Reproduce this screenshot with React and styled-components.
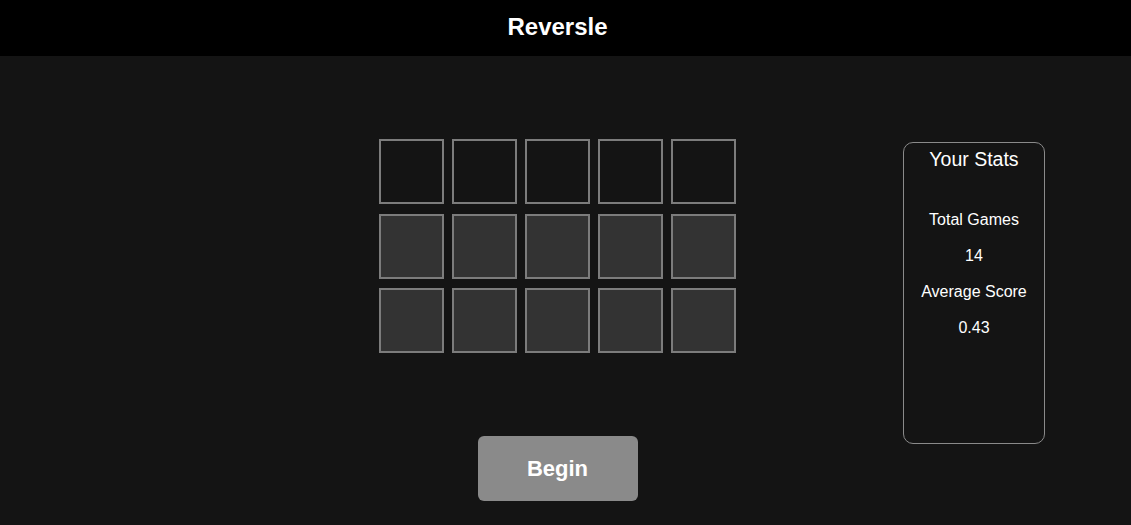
import React from 'react';
import styled, { createGlobalStyle } from 'styled-components';

const GlobalStyle = createGlobalStyle`
  html, body {
    margin: 0;
    padding: 0;
    background: #141414;
    font-family: "Liberation Sans", Arial, sans-serif;
    color: #fff;
  }
`;

const Header = styled.header`
  height: 56px;
  padding-right: 16px;
  background: #000;
  display: flex;
  align-items: center;
  justify-content: center;
`;

const Title = styled.h1`
  margin: 0 0 2px;
  font-size: 24px;
  font-weight: bold;
  color: #fff;
`;

const Main = styled.main`
  display: grid;
  grid-template-columns: 1fr 357px 1fr;
  padding-right: 16px;
  height: 469px;
`;

const Game = styled.section`
  grid-column: 2;
  display: flex;
  flex-direction: column;
  align-items: center;
  padding-top: 83px;
`;

const Board = styled.div`
  display: grid;
  grid-template-columns: repeat(5, 65px);
  column-gap: 8px;
  row-gap: 9.5px;
`;

const Tile = styled.div`
  box-sizing: border-box;
  width: 65px;
  height: 65px;
  border: 2px solid #7c7c7c;
  background: ${props => (props.active ? '#141414' : '#333333')};
`;

const BeginButton = styled.button`
  margin-top: 83px;
  width: 160px;
  height: 65px;
  border: none;
  border-radius: 6px;
  background: #8a8a8a;
  color: #fff;
  font-family: inherit;
  font-size: 22px;
  font-weight: bold;
  cursor: pointer;
`;

const Stats = styled.aside`
  grid-column: 3;
  justify-self: end;
  margin-top: 86px;
  margin-right: 70px;
  box-sizing: border-box;
  width: 142px;
  height: 302px;
  border: 1px solid #8a8a8a;
  border-radius: 10px;
  display: flex;
  flex-direction: column;
  align-items: center;
  padding-top: 5px;
`;

const StatsTitle = styled.h2`
  margin: 0 0 41px;
  font-size: 19.5px;
  line-height: 22px;
  font-weight: normal;
`;

const StatLine = styled.p`
  margin: 0 0 18px;
  font-size: 16px;
  line-height: 18px;
`;

const rows = [0, 1, 2];
const cols = [0, 1, 2, 3, 4];

export default function App() {
  return (
    <>
      <GlobalStyle />
      <Header>
        <Title>Reversle</Title>
      </Header>
      <Main>
        <Game>
          <Board>
            {rows.map(r =>
              cols.map(c => <Tile key={`${r}-${c}`} active={r === 0} />)
            )}
          </Board>
          <BeginButton>Begin</BeginButton>
        </Game>
        <Stats>
          <StatsTitle>Your Stats</StatsTitle>
          <StatLine>Total Games</StatLine>
          <StatLine>14</StatLine>
          <StatLine>Average Score</StatLine>
          <StatLine>0.43</StatLine>
        </Stats>
      </Main>
    </>
  );
}
